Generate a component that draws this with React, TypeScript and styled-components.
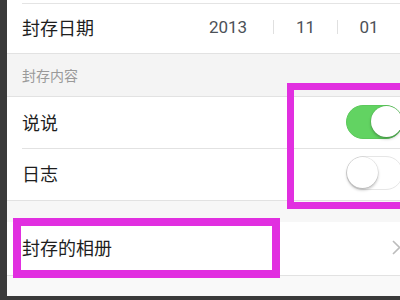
import styled, { createGlobalStyle } from 'styled-components';

const GlobalStyle = createGlobalStyle`
  *, *::before, *::after {
    box-sizing: border-box;
  }
  html, body {
    margin: 0;
    padding: 0;
    overflow: hidden;
    background: #3a3a3a;
  }
  body {
    font-family: "Noto Sans CJK SC", "Noto Sans", sans-serif;
  }
`;

const Screen = styled.div`
  position: relative;
  width: 400px;
  height: 300px;
  padding: 0 0 4px 7px;
  background: #3a3a3a;
  overflow: hidden;
`;

const Panel = styled.div`
  display: flex;
  flex-direction: column;
  height: 100%;
  background: #fbfbfb;
`;

const TopStub = styled.div`
  height: 4px;
  background: #fff;
  background-image: linear-gradient(#e4e4e4, #e4e4e4);
  background-size: calc(100% - 15px) 1px;
  background-position: right bottom;
  background-repeat: no-repeat;
`;

const Row = styled.div<{ $inset?: boolean; $height: number }>`
  display: flex;
  align-items: center;
  justify-content: space-between;
  height: ${p => p.$height}px;
  padding: 0 0 3px 15px;
  background: #fff;
  border-bottom: 1px solid #e2e2e2;
  ${p => p.$inset && `
    border-bottom: none;
    background-image: linear-gradient(#e2e2e2, #e2e2e2);
    background-size: calc(100% - 15px) 1px;
    background-position: right bottom;
    background-repeat: no-repeat;
  `}
`;

const Label = styled.span`
  font-size: 18px;
  color: #1e1e1e;
`;

const SectionHeader = styled.div`
  display: flex;
  align-items: center;
  height: 43px;
  padding-left: 15px;
  background: #f4f4f4;
  border-bottom: 1px solid #e2e2e2;
  font-size: 14px;
  color: #9a9a9a;
`;

const DateGroup = styled.div`
  display: flex;
  align-items: center;
  height: 100%;
`;

const DateValue = styled.span<{ $width: number }>`
  width: ${p => p.$width}px;
  text-align: center;
  font-family: Roboto, "Liberation Sans", sans-serif;
  font-size: 17px;
  color: #4c5157;
`;

const DateDivider = styled.span`
  width: 1px;
  height: 14px;
  background: #e0e0e0;
`;

const Track = styled.div<{ $on: boolean }>`
  position: relative;
  width: 57px;
  height: 34px;
  margin-right: -3px;
  border-radius: 17px;
  background: ${p => (p.$on ? '#62d362' : '#fff')};
  border: 1.5px solid ${p => (p.$on ? '#5cc95c' : '#e6e6e6')};
`;

const Knob = styled.div<{ $on: boolean }>`
  position: absolute;
  top: 0;
  ${p => (p.$on ? 'right: 0;' : 'left: 0;')}
  width: 31px;
  height: 31px;
  border-radius: 50%;
  background: #fff;
  box-shadow: 0 2px 3px rgba(0, 0, 0, 0.25), 0 0 0 0.5px rgba(0, 0, 0, 0.12);
`;

const Gap = styled.div<{ $height: number }>`
  height: ${p => p.$height}px;
  background: #f7f7f7;
`;

const Footer = styled.div`
  flex: 1;
  background: #f9f9f9;
`;

const Chevron = styled.svg`
  width: 9px;
  height: 15px;
  margin-right: -1px;
`;

const Highlight = styled.div<{ $x: number; $y: number; $w: number; $h: number; $stroke: number }>`
  position: absolute;
  left: ${p => p.$x}px;
  top: ${p => p.$y}px;
  width: ${p => p.$w}px;
  height: ${p => p.$h}px;
  border: ${p => p.$stroke}px solid #e12fe0;
  pointer-events: none;
`;

const Toggle = ({ on }: { on: boolean }) => (
  <Track $on={on}>
    <Knob $on={on} />
  </Track>
);

export default function App() {
  return (
    <>
      <GlobalStyle />
      <Screen>
        <Panel>
          <TopStub />
          <Row $height={50}>
            <Label>封存日期</Label>
            <DateGroup>
              <DateValue $width={90}>2013</DateValue>
              <DateDivider />
              <DateValue $width={63}>11</DateValue>
              <DateDivider />
              <DateValue $width={62}>01</DateValue>
            </DateGroup>
          </Row>
          <SectionHeader>封存内容</SectionHeader>
          <Row $height={52} $inset>
            <Label>说说</Label>
            <Toggle on />
          </Row>
          <Row $height={52}>
            <Label>日志</Label>
            <Toggle on={false} />
          </Row>
          <Gap $height={21} />
          <Row $height={54}>
            <Label>封存的相册</Label>
            <Chevron viewBox="0 0 9 15">
              <path d="M1 1 L7.5 7.5 L1 14" fill="none" stroke="#bcbcbc" strokeWidth="1.6" />
            </Chevron>
          </Row>
          <Footer />
        </Panel>
        <Highlight $x={287} $y={83} $w={125} $h={126} $stroke={7} />
        <Highlight $x={13} $y={218} $w={267} $h={60} $stroke={8} />
      </Screen>
    </>
  );
}
